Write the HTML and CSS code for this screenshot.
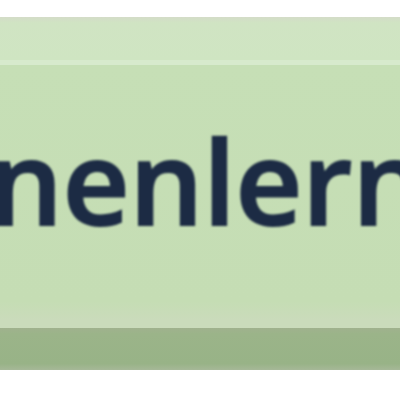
FILE: index.html
```html
<!DOCTYPE html>
<html lang="de">
<head>
<meta charset="utf-8">
<link rel="stylesheet" href="styles.css">
</head>
<body>
<div class="page">
  <div class="button">
    <div class="bevel-top"></div>
    <div class="highlight"></div>
    <div class="face">
      <span class="label">kennenlernen</span>
    </div>
    <div class="bevel-bottom"></div>
  </div>
</div>
</body>
</html>
```
FILE: styles.css
```css
html, body {
  margin: 0;
  padding: 0;
  background: #ffffff;
}
.page {
  width: 400px;
  height: 400px;
  overflow: hidden;
  padding-top: 17px;
  box-sizing: border-box;
}
.button {
  display: flex;
  flex-direction: column;
  width: 400px;
}
.bevel-top {
  height: 43px;
  background: linear-gradient(#d4dcc8 0px, #d0e4c3 6px, #cfe5c2 100%);
}
.highlight {
  height: 5px;
  background: #d7eacd;
}
.face {
  height: 263px;
  background: linear-gradient(#c6dfb6 0%, #c5ddb4 90%, #cadbbb 97%, #cadbbb 100%);
  box-sizing: border-box;
  padding-top: 57px;
  white-space: nowrap;
  overflow: hidden;
}
.label {
  display: block;
  font-family: "Open Sans", "DejaVu Sans", sans-serif;
  font-weight: 600;
  font-size: 116px;
  line-height: 1;
  color: #1c2b44;
  -webkit-text-stroke: 2px #1c2b44;
  margin-left: -218px;
  filter: blur(0.8px);
}
.bevel-bottom {
  height: 42px;
  background: linear-gradient(#a0b18e 0px, #9bb489 6px, #98b387 85%, #a6b898 100%);
}
```
